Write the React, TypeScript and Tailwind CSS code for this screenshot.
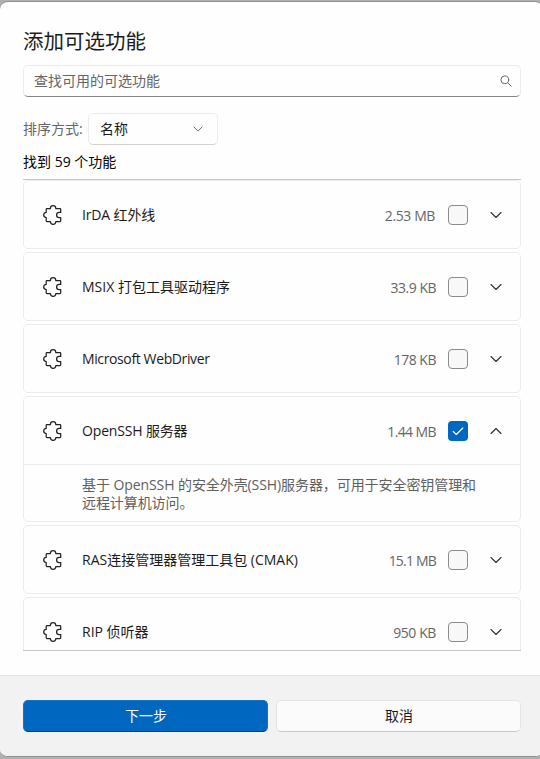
import { Fragment } from "react";

type Feature = { name: string; size: string; detail?: string; checked?: boolean; tracking?: string; sizeTracking: string };

const features: Feature[] = [
  { name: "IrDA 红外线", size: "2.53 MB", tracking: "tracking-[-0.14px]", sizeTracking: "mr-[13px] tracking-[-0.4px]" },
  { name: "MSIX 打包工具驱动程序", size: "33.9 KB", sizeTracking: "mr-3 tracking-[-0.5px]" },
  { name: "Microsoft WebDriver", size: "178 KB", tracking: "tracking-[-0.38px]", sizeTracking: "mr-3 tracking-[-0.5px]" },
  {
    name: "OpenSSH 服务器",
    size: "1.44 MB",
    checked: true,
    tracking: "tracking-[-0.16px]",
    sizeTracking: "mr-3 tracking-[-0.6px]",
    detail: "基于 OpenSSH 的安全外壳(SSH)服务器，可用于安全密钥管理和\n远程计算机访问。",
  },
  { name: "RAS连接管理器管理工具包 (CMAK)", size: "15.1 MB", sizeTracking: "mr-3 tracking-[-0.8px]" },
  { name: "RIP 侦听器", size: "950 KB", sizeTracking: "mr-3 tracking-[-0.4px]" },
];

function Puzzle() {
  return (
    <svg className="size-5 shrink-0" viewBox="0 0 20 20" fill="none" stroke="#222" strokeWidth="1.25" strokeLinejoin="round">
      <path d="M4 3.5H7.4C7.4 1.7 8.6.7 10.1.7s2.7 1 2.7 2.8h4.1q.8 0 .8.8v3.1H16.2c-1.5 0-2.6 1.1-2.6 2.6s1.1 2.6 2.6 2.6h1.5v3.1q0 .8-.8.8h-4.1c0 1.8-1.2 2.8-2.7 2.8s-2.7-1-2.7-2.8H4q-.8 0-.8-.8v-3.1C1.6 12.4.7 11.5.7 10s.9-2.4 2.5-2.6V4.3q0-.8.8-.8z" />
    </svg>
  );
}

function Chevron({ up = false, small = false }: { up?: boolean; small?: boolean }) {
  return (
    <svg className={small ? "h-2.5 w-2.5" : "h-3 w-3"} viewBox="0 0 12 12" fill="none" stroke={small ? "#666" : "#333"} strokeWidth="1.15" strokeLinecap="round" strokeLinejoin="round">
      <path d={up ? "M1 8.5L6 3.5L11 8.5" : "M1 3.5L6 8.5L11 3.5"} />
    </svg>
  );
}

function Check({ checked = false }: { checked?: boolean }) {
  if (!checked) return <span className="size-5 rounded-[4px] border border-[#8b8b8b] bg-[#f8f8f8]" />;
  return (
    <span className="flex size-5 items-center justify-center rounded-[4px] bg-[#0067c0]">
      <svg className="size-3" viewBox="0 0 12 12" fill="none" stroke="#fff" strokeWidth="1.15" strokeLinecap="round" strokeLinejoin="round">
        <path d="M1.2 6.5L4.3 9.5L10.8 3" />
      </svg>
    </span>
  );
}

function Card({ feature }: { feature: Feature }) {
  return (
    <div className="shrink-0 rounded-[5px] border border-[#ececec] bg-[#fefefe]">
      <div className="flex h-[67px] items-center pr-[18px] pl-[19px]">
        <Puzzle />
        <span className={`ml-[19px] flex-1 text-[#1b1b1b] ${feature.tracking ?? ""}`}>{feature.name}</span>
        <span className={`mt-[3px] text-[#666] ${feature.sizeTracking}`}>{feature.size}</span>
        <Check checked={feature.checked} />
        <span className="ml-[22px]">
          <Chevron up={feature.checked} />
        </span>
      </div>
      {feature.detail && (
        <p className="h-[57px] border-t border-[#ececec] pt-[11px] pl-[58px] leading-[18px] tracking-[-0.08px] text-[#606060]">
          {feature.detail.split("\n").map((line, i) => (
            <Fragment key={i}>
              {i > 0 && <br />}
              {line}
            </Fragment>
          ))}
        </p>
      )}
    </div>
  );
}

export default function App() {
  return (
    <div className="h-[759px] w-[540px] overflow-hidden bg-[#b0b0b0] pt-px font-['Open_Sans','Noto_Sans_CJK_SC',sans-serif] text-[14px] leading-5">
      <div className="flex h-[756px] w-[543px] flex-col overflow-hidden rounded-[8px] border-y border-[#919191] bg-[#fefefe]">
        <main className="flex h-[674px] w-[521px] shrink-0 flex-col pl-[23px]">
          <h1 className="mt-[25px] text-[20.5px] leading-7 font-normal text-[#1b1b1b]">添加可选功能</h1>
          <div className="mt-[10px] flex h-8 shrink-0 items-center justify-between rounded-[5px] border border-[#ececec] border-b-[#858585] pr-2 pl-[10px] text-[#666]">
            <span>查找可用的可选功能</span>
            <svg className="size-3" viewBox="0 0 12 12" fill="none" stroke="#666" strokeLinecap="round">
              <circle cx="4.8" cy="4.8" r="3.9" />
              <path d="M7.7 7.7L11.2 11.2" />
            </svg>
          </div>
          <div className="mt-4 flex h-8 shrink-0 items-center">
            <span className="w-[65px] whitespace-nowrap text-[#666]">排序方式:</span>
            <div className="flex h-8 w-[130px] items-center justify-between rounded-[5px] border border-[#ebebeb] border-b-[#d2d2d2] pr-[14px] pl-[11px]">
              <span className="text-[#1b1b1b]">名称</span>
              <Chevron small />
            </div>
          </div>
          <p className="mt-[7px] text-black">找到 59 个功能</p>
          <div className="mt-[7px] flex h-[472px] shrink-0 flex-col gap-[3px] overflow-hidden border-y border-[#c5c5c5]">
            {features.map((f) => (
              <Card key={f.name} feature={f} />
            ))}
          </div>
        </main>
        <footer className="flex w-[521px] grow gap-2 bg-[#f2f2f2] pt-6 pl-[23px] shadow-[0_-1px_0_#e3e3e3,22px_0_0_#f2f2f2,22px_-1px_0_#e3e3e3]">
          <button className="h-8 w-[245px] rounded-[5px] border border-[#1473c5] border-b-[#003e73] bg-[#0067c0] pl-px text-white">下一步</button>
          <button className="h-8 w-[245px] rounded-[5px] border border-[#e5e5e5] border-b-[#cacaca] bg-[#fbfbfb] pl-px text-[#1b1b1b]">取消</button>
        </footer>
      </div>
    </div>
  );
}
